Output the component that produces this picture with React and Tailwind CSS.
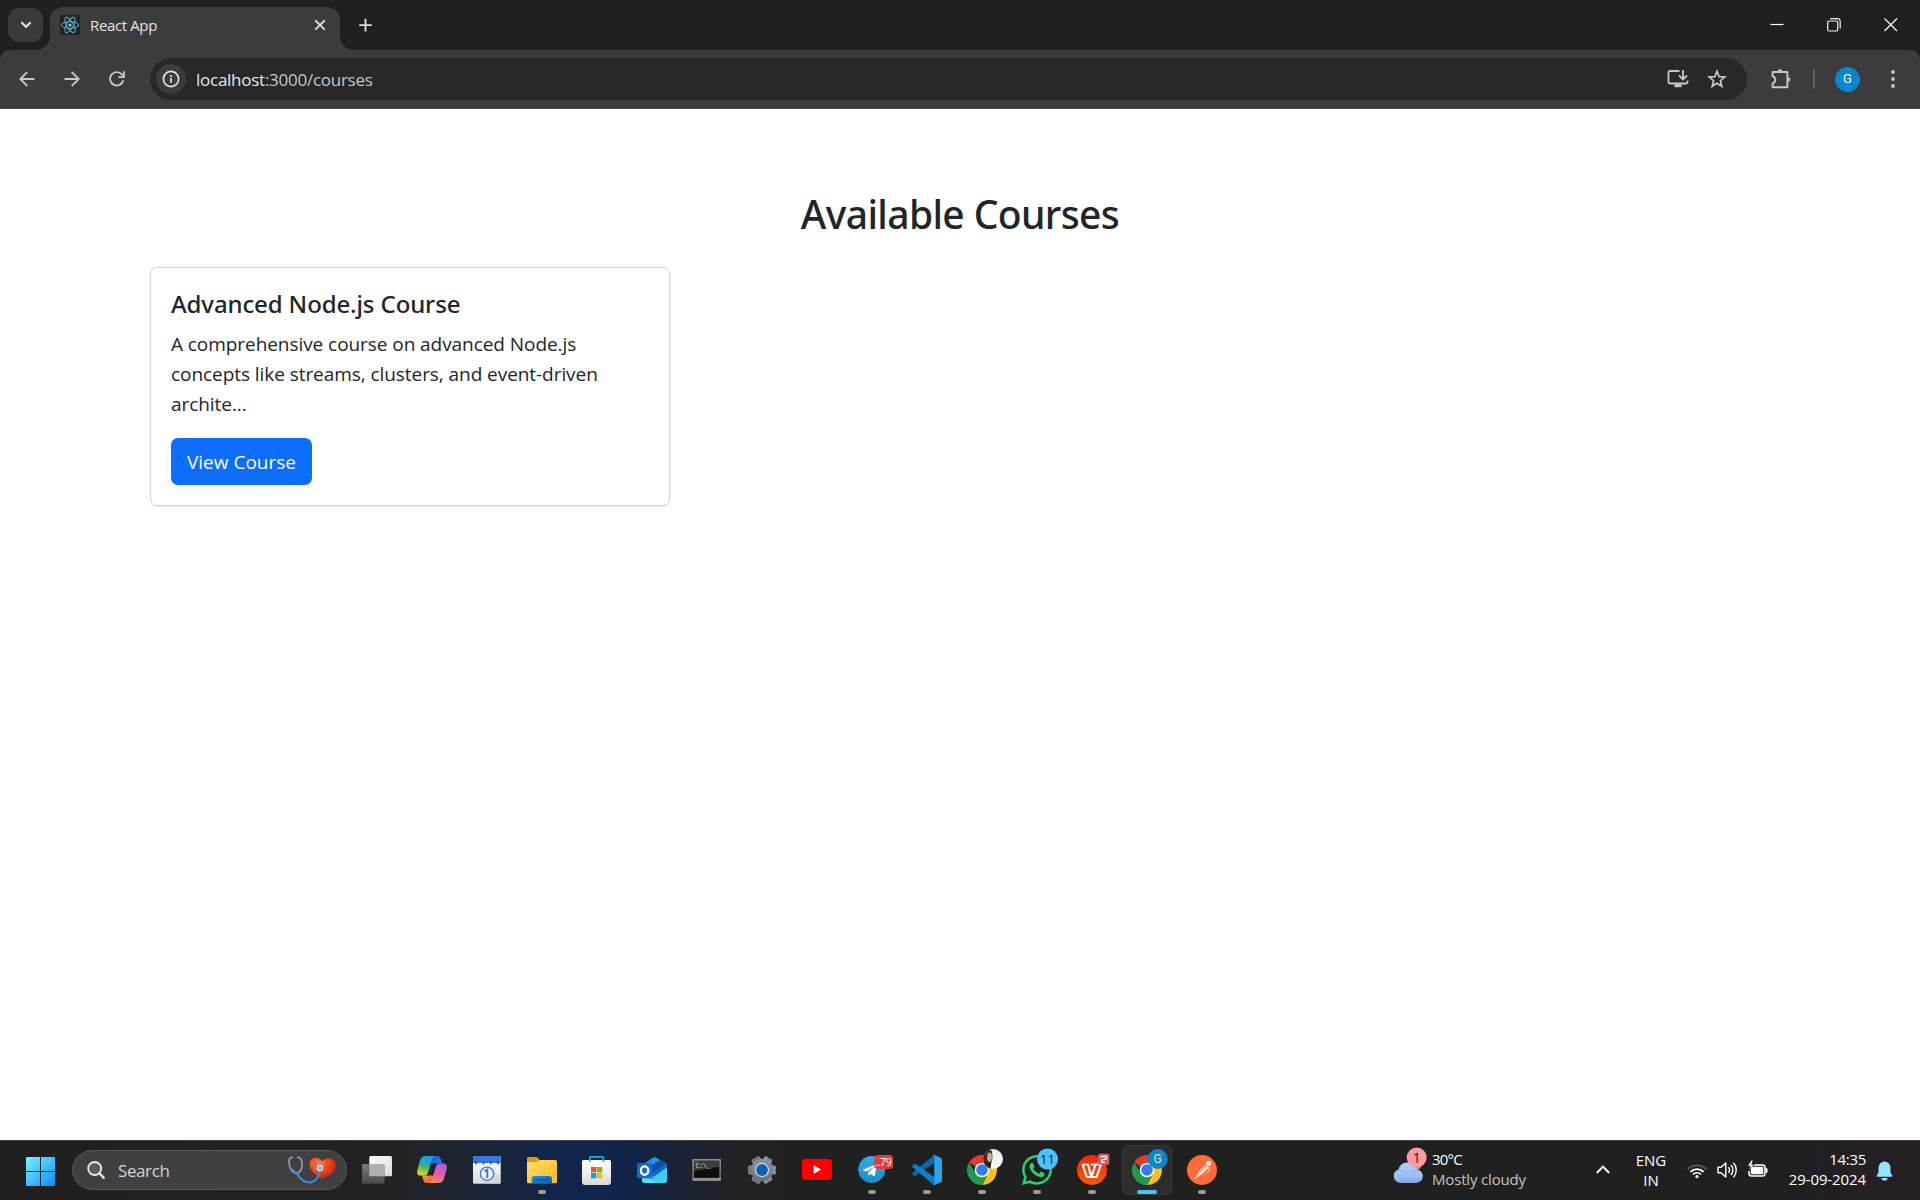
import { FaWhatsapp, FaTelegramPlane } from "react-icons/fa";

function ReactLogo() {
  return (
    <svg viewBox="0 0 20 20" className="size-5 shrink-0">
      <rect width="20" height="20" rx="1" fill="#222324" />
      <g fill="none" stroke="#56b5cc" strokeWidth="1">
        <ellipse cx="10" cy="10" rx="8.6" ry="3.3" />
        <ellipse cx="10" cy="10" rx="8.6" ry="3.3" transform="rotate(60 10 10)" />
        <ellipse cx="10" cy="10" rx="8.6" ry="3.3" transform="rotate(120 10 10)" />
      </g>
      <circle cx="10" cy="10" r="1.6" fill="#61dafb" />
    </svg>
  );
}

function TabStrip() {
  return (
    <div className="flex h-[50px] items-start bg-[#1f2120]">
      <div className="flex h-[50px] flex-1 items-start">
        <button className="ml-2 mt-2 flex h-[34px] w-[35px] items-center justify-center rounded-[11px] bg-[#3a3a3a]">
          <svg viewBox="0 0 12 8" className="h-2 w-3" fill="none" stroke="#e3e3e3" strokeWidth="2">
            <path d="M1.3 1.3 6 5.8l4.7-4.5" />
          </svg>
        </button>
        <div className="flex h-[50px] items-end">
          <svg viewBox="0 0 14 14" className="-ml-[7px] size-[14px]" fill="#3c3c3c">
            <path d="M14 0v14H0A14 14 0 0 0 14 0Z" />
          </svg>
          <div className="flex h-[43px] w-[290px] items-center rounded-t-[13px] bg-[#3c3c3c] pb-[7px] pl-[10px] pr-3">
            <ReactLogo />
            <span className="ml-[10px] flex-1 text-[15px] leading-5 tracking-[-0.37px] text-[#e3e3e3]">React App</span>
            <svg viewBox="0 0 16 16" className="size-4" fill="none" stroke="#e3e3e3" strokeWidth="1.9">
              <path d="m3.3 3.3 9.4 9.4M12.7 3.3l-9.4 9.4" />
            </svg>
          </div>
          <svg viewBox="0 0 14 14" className="size-[14px]" fill="#3c3c3c">
            <path d="M0 0v14h14A14 14 0 0 1 0 0Z" />
          </svg>
        </div>
        <svg viewBox="0 0 14 14" className="ml-1 mt-[18px] size-[14px]" fill="none" stroke="#dcdcdc" strokeWidth="1.9">
          <path d="M7.5 .8v12.6M1.2 7.1h12.6" />
        </svg>
      </div>
      <svg viewBox="0 0 14 14" className="mr-[43px] mt-[18px] size-[14px]" stroke="#fff" strokeWidth="1.2">
        <path d="M.5 6.500h13" />
      </svg>
      <svg viewBox="0 0 14 14" className="mr-[43px] mt-[18px] size-[14px]" fill="none" stroke="#f4f4f4" strokeWidth="1.2">
        <rect x=".7" y="3" width="10" height="10" rx="1.4" />
        <path d="M3.200 .7H10.600A2.700 2.700 0 0 1 13.200 3.400V10.400" />
      </svg>
      <svg viewBox="0 0 14 14" className="mr-[22px] mt-[18px] size-[14px]" stroke="#f4f4f4" strokeWidth="1.3">
        <path d="m.5.5 12.500 12.500M13 .5.5 13" />
      </svg>
    </div>
  );
}

function Toolbar() {
  return (
    <div className="bg-[#1f2120]">
      <div className="flex h-[59px] items-center rounded-t-[10px] border-b border-[#4a4a4a] bg-[#3c3c3c]">
        <svg viewBox="0 0 16 16" className="ml-[19px] size-4" fill="none" stroke="#c7c7c7" strokeWidth="1.8">
          <path d="M15.500 8H1.500M8.300 1 1.300 8l7 7" />
        </svg>
        <svg viewBox="0 0 16 16" className="ml-[29px] size-4" fill="none" stroke="#c7c7c7" strokeWidth="1.8">
          <path d="M.5 8h14M7.700 1l7 7-7 7" />
        </svg>
        <svg viewBox="0 0 16 16" className="ml-[29px] size-4" fill="none" stroke="#c7c7c7" strokeWidth="1.8">
          <path d="M14.300 9.300A6.700 6.700 0 1 1 13 3.600L14.800 5.600M15 .3v5.800H9.200" />
        </svg>
        <div className="ml-[25px] flex h-[42px] w-[1597px] items-center rounded-full bg-[#282828] pl-[6px] pr-5">
          <div className="flex size-[30px] items-center justify-center rounded-full bg-[#3c3c3c]">
            <svg viewBox="0 0 18 18" className="size-[18px]" fill="none" stroke="#e3e3e3" strokeWidth="1.7">
              <circle cx="9" cy="9" r="7.600" />
              <path d="M9 8v4.800M9 5v1.900" />
            </svg>
          </div>
          <span className="ml-[10px] flex-1 pt-[2px] text-[17px] leading-6 tracking-[-0.26px] text-[#c7c7c7]">
            <span className="text-[#e8e8e8]">localhost</span>:3000/courses
          </span>
          <svg viewBox="0 0 22 20" className="h-5 w-[22px]" fill="none" stroke="#c7c7c7" strokeWidth="1.8">
            <path d="M12.500 2H3A1.500 1.500 0 0 0 1.500 3.500V13A1.500 1.500 0 0 0 3 14.500H19A1.500 1.500 0 0 0 20.500 13V11.500" />
            <path d="M16 1v9M12 6.500 16 10.400l4-3.900" />
            <path d="M7.500 16.700h7" strokeWidth="3" />
          </svg>
          <svg viewBox="0 0 20 20" className="ml-[18px] size-5" fill="none" stroke="#c7c7c7" strokeWidth="1.7">
            <path d="m10 2.300 2.100 5.300 5.700.4-4.400 3.700 1.400 5.600L10 14.300l-4.800 3 1.400-5.600L2.200 8l5.700-.4Z" />
          </svg>
        </div>
        <svg viewBox="0 0 22 22" className="ml-[23px] size-[22px]" fill="none" stroke="#c7c7c7" strokeWidth="1.9">
          <path d="M2.600 4h14.800V19.300H2.600V15.300A3.600 3.600 0 0 0 2.600 8.300Z" strokeLinejoin="round" />
          <path d="M7.700 3.200a2.300 2 0 0 1 4.600 0ZM18.300 9.300a2 2.300 0 0 1 0 4.600Z" fill="#c7c7c7" stroke="none" />
        </svg>
        <div className="ml-[21px] h-5 w-[2px] bg-[#5f6061]" />
        <div className="ml-5 flex size-[25px] items-center justify-center rounded-full bg-[#0288d1] font-['Roboto'] text-[13px] text-white">G</div>
        <svg viewBox="0 0 4 18" className="ml-[31px] h-[18px] w-1" fill="#c7c7c7">
          <circle cx="2" cy="2" r="1.900" />
          <circle cx="2" cy="9" r="1.900" />
          <circle cx="2" cy="16" r="1.900" />
        </svg>
      </div>
    </div>
  );
}

function CoursesPage() {
  return (
    <main className="flex-1 bg-white px-[150px] pt-[81px] text-[#212529]">
      <h1 className="text-center font-['Noto_Sans'] text-[39px] font-medium leading-[48px] tracking-[-0.62px]">Available Courses</h1>
      <article className="mt-[29px] h-[239px] w-[520px] rounded-[7px] border border-[#d2d2d3] px-5 pt-[21px] shadow-[0_1px_3px_rgba(0,0,0,0.08)]">
        <h2 className="font-['Noto_Sans'] text-[24px] font-medium leading-[30px] tracking-[-0.12px]">Advanced Node.js Course</h2>
        <p className="mt-[10px] text-[19px] leading-[30px] tracking-[-0.06px]">
          A comprehensive course on advanced Node.js
          <br />
          concepts like streams, clusters, and event-driven
          <br />
          archite...
        </p>
        <button className="mt-[19px] h-[47px] w-[141px] whitespace-nowrap rounded-[7px] bg-[#0d6efd] pt-0.5 text-[19px] text-white">View Course</button>
      </article>
    </main>
  );
}

const TaskViewIcon = () => (
  <>
    <defs>
      <linearGradient id="tv" x1="0" y1="0" x2="1" y2="1"><stop stopColor="#fff" /><stop offset="1" stopColor="#d8d8d8" /></linearGradient>
      <linearGradient id="tb" x1="0" y1="0" x2="0" y2="1"><stop stopColor="#7a7a7a" /><stop offset="1" stopColor="#4c4c4c" /></linearGradient>
    </defs>
    <rect x="7.300" y="0" width="22.700" height="20.300" rx="1.500" fill="url(#tv)" />
    <rect x="0" y="8" width="22.500" height="19.700" rx="1.500" fill="url(#tb)" />
    <path d="M7.300 8H21a1.500 1.500 0 0 1 1.500 1.500v10.800H8.800a1.500 1.500 0 0 1-1.500-1.500Z" fill="#b0b0b0" />
  </>
);

const CopilotIcon = () => (
  <>
    <defs>
      <linearGradient id="cp1" x1=".6" y1="0" x2=".3" y2="1"><stop stopColor="#1b9de8" /><stop offset=".35" stopColor="#22a6c9" /><stop offset=".65" stopColor="#5cc04f" /><stop offset="1" stopColor="#f2d21c" /></linearGradient>
      <linearGradient id="cp2" x1=".7" y1="0" x2=".3" y2="1"><stop stopColor="#a85be8" /><stop offset=".5" stopColor="#e85aa8" /><stop offset="1" stopColor="#fb8a5c" /></linearGradient>
      <linearGradient id="cp3" x1="0" y1="0" x2="1" y2="1"><stop stopColor="#1250c4" /><stop offset="1" stopColor="#2a86e8" /></linearGradient>
      <linearGradient id="cp4" x1="0" y1="0" x2="1" y2="1"><stop stopColor="#f9a03a" /><stop offset="1" stopColor="#ee4f3c" /></linearGradient>
    </defs>
    <path d="M14 0h6c2.600 0 3.400 1.500 4 3.800l1 3.700H14Z" fill="url(#cp3)" />
    <path d="M16 27h-6c-2.600 0-3.400-1.500-4-3.800L5 19.500H16Z" fill="url(#cp4)" />
    <path d="M9 0h10c-2.500.4-3.600 2.200-4.400 4.800l-3.200 10.800c-.9 3-2 4-4.600 4H4c-3.400 0-4.600-2.400-3.600-5.900L3 4.600C4 1.300 5.600 0 9 0Z" fill="url(#cp1)" />
    <path d="M21 27H11c2.500-.4 3.600-2.200 4.400-4.800l3.200-10.800c.9-3 2-4 4.600-4H26c3.400 0 4.600 2.400 3.600 5.900L27 22.400c-1 3.300-2.600 4.600-6 4.600Z" fill="url(#cp2)" />
  </>
);

const CalendarIcon = () => (
  <>
    <defs><linearGradient id="cal" x1="0" y1="0" x2="0" y2="1"><stop stopColor="#fff" /><stop offset="1" stopColor="#dcdcdc" /></linearGradient></defs>
    <rect x="1" y="0" width="27.700" height="27.700" rx="1.500" fill="url(#cal)" />
    <path d="M2.500 0h24.700a1.500 1.500 0 0 1 1.500 1.500V7H1V1.500A1.500 1.500 0 0 1 2.500 0Z" fill="#3576e4" />
    <path d="M19.500 13 28.700 22v5.700H14l-4-4Z" fill="#c9ccd2" opacity=".55" />
    {[4, 11.500, 18.700, 26].map((x) => <rect key={x} x={x - 0.8} y="5" width="1.700" height="3.500" rx=".8" fill="#474c57" />)}
    <circle cx="15" cy="17.700" r="6.600" fill="#f4f6fa" stroke="#3576e4" strokeWidth="1.300" />
    <path d="M12.500 15.300 15.300 13.700V22" fill="none" stroke="#3576e4" strokeWidth="2" />
  </>
);

const ExplorerIcon = () => (
  <>
    <defs>
      <linearGradient id="fo" x1="0" y1="0" x2="1" y2="1"><stop stopColor="#ffdc6a" /><stop offset="1" stopColor="#f9b91c" /></linearGradient>
      <linearGradient id="fb" x1="0" y1="0" x2="1" y2="1"><stop stopColor="#1a90dc" /><stop offset="1" stopColor="#0b5fae" /></linearGradient>
    </defs>
    <path d="M0 2.500A1.500 1.500 0 0 1 1.500 1h7.300c1 0 1.600.4 2.300 1.200l1.500 1.600V8H0Z" fill="#dc9a0c" />
    <path d="M0 6h9.500l3.200-2H28.500A1.500 1.500 0 0 1 30 5.500v20.300a1.500 1.500 0 0 1-1.500 1.500h-27A1.500 1.500 0 0 1 0 25.800Z" fill="url(#fo)" />
    <path d="M4.700 27.300V23a3 3 0 0 1 3-3H22a3 3 0 0 1 3 3v4.300Z" fill="url(#fb)" />
    <path d="M8.300 23.700h13.400" stroke="#084b8f" strokeWidth="1.200" />
  </>
);

const StoreIcon = () => (
  <>
    <defs><linearGradient id="st" x1="0" y1="0" x2="0" y2="1"><stop stopColor="#fff" /><stop offset="1" stopColor="#dadada" /></linearGradient></defs>
    <path d="M0 5.500A1.500 1.500 0 0 1 1.500 4h26A1.500 1.500 0 0 1 29 5.500V26a3 3 0 0 1-3 3H3a3 3 0 0 1-3-3Z" fill="url(#st)" />
    <path d="M7.800 6V1.500q0-.7.7-.7h12.200q.7 0 .7.700V6" fill="none" stroke="#28a8e0" strokeWidth="1.700" />
    <rect x="9" y="11" width="5.300" height="5.300" fill="#f25022" /><rect x="15" y="11" width="5.300" height="5.300" fill="#7fba00" />
    <rect x="9" y="17" width="5.300" height="5.300" fill="#00a4ef" /><rect x="15" y="17" width="5.300" height="5.300" fill="#ffb900" />
  </>
);

const OutlookIcon = () => (
  <>
    <path d="M5 9 17.300 1 28 6.500q2 1.200 2 3V24a3 3 0 0 1-3 3H8a3 3 0 0 1-3-3Z" fill="#2aa5e8" />
    <path d="M5 9 17.300 1 23 4 9 13H5Z" fill="#2c8fe0" />
    <path d="M9 13 23 4l5 2.500q1 .7 1.400 1.500L13 19Z" fill="#0a4fa8" />
    <path d="M13 19 29.400 8q.6.700.6 2v1.500L17 20.500Z" fill="#1266c4" />
    <path d="M30 11.500V24a3 3 0 0 1-3 3H8.500Z" fill="#3fcdf5" />
    <path d="M5 19 21 27H8a3 3 0 0 1-3-3Z" fill="#58e0fb" />
    <rect x="0" y="7" width="15.500" height="15.300" rx="1.500" fill="#0f6cc9" />
    <ellipse cx="7.600" cy="14.600" rx="3.700" ry="4.200" fill="none" stroke="#fff" strokeWidth="2.300" />
  </>
);

const TerminalIcon = () => (
  <>
    <defs><linearGradient id="cm" x1="0" y1="0" x2="0" y2="1"><stop stopColor="#8f8f8f" /><stop offset=".8" stopColor="#6c6c6c" /><stop offset="1" stopColor="#a8a8a8" /></linearGradient></defs>
    <rect x=".3" y="3" width="28.700" height="21.700" rx="1" fill="url(#cm)" />
    <rect x="2" y="4.800" width="25.300" height="17" fill="#0d0d0d" />
    <path d="M2 4.800h25.300v6L2 15Z" fill="#3c3c3c" />
    <text x="3.600" y="12" fontFamily="Liberation Mono" fontSize="7" fill="#d5d5d5" textLength="15">C:\_</text>
  </>
);

const SettingsIcon = () => (
  <>
    <defs><linearGradient id="gr" x1="0" y1="0" x2="0" y2="1"><stop stopColor="#8b949e" /><stop offset="1" stopColor="#69727c" /></linearGradient></defs>
    <g fill="url(#gr)" stroke="#7b848e" strokeWidth="1" strokeLinejoin="round">
      {[30, 90, 150].map((a) => <path key={a} d="M10.500 4 11.300 .5h3v.8h1.400v-.8h3L19.500 4v20l-.8 3.500h-7.400L10.500 24Z" transform={`rotate(${a} 15 14)`} />)}
      <circle cx="15" cy="14" r="11" stroke="none" />
    </g>
    <circle cx="15" cy="14" r="7.200" fill="#d2dae2" />
    <circle cx="15" cy="14" r="5.900" fill="#0f5fb0" />
  </>
);

const YoutubeIcon = () => (
  <>
    <rect x="0" y="3" width="30" height="21" rx="3.500" fill="#fe0000" />
    <path d="M11.700 9.300v8.400l7.500-4.200Z" fill="#fff" />
  </>
);

const VsCodeIcon = () => (
  <>
    <path d="M22-1 .6 16.800q-.8.800 0 1.600l1.500 1.500q.7.500 1.500 0L23 6.500Z" fill="#0b66a8" />
    <path d="M22 29 .6 11.200q-.8-.8 0-1.600l1.500-1.500q.7-.5 1.500 0L23 21.500Z" fill="#0f7fc8" />
    <path d="M22-1.300 29 2q1 .6 1 1.800v20.400q0 1.200-1 1.800l-7 3.300q-1.200.2-1.800-.6 2.100.5 2.100-1.700V1q0-2.200-2.100-1.700.6-.8 1.800-.6Z" fill="#27a5f2" />
  </>
);

const ChromeDisc = () => (
  <>
    <path d="M15 14 2 6.500A15 15 0 0 1 28.300 7Z" fill="#e33b2e" />
    <path d="M15 7h13.300A15 15 0 0 1 15.300 29L21 17.500Z" fill="#fbc116" />
    <path d="M2 6.500 8.900 17.500 15 21l6-3.500L15.300 29A15 15 0 0 1 2 6.500Z" fill="#229a4b" />
    <circle cx="15" cy="14" r="7.300" fill="#fff" />
    <circle cx="15" cy="14" r="5.800" fill="#2f7de9" />
  </>
);

const ChromeGuestIcon = () => (
  <>
    <ChromeDisc />
    <circle cx="26" cy="3" r="10" fill="#f2f3f5" />
    <path d="M19 10A10 10 0 0 1 22-6.200L25-5l.5 7L23 12.500A10 10 0 0 1 19 10Z" fill="#3b2a27" />
    <path d="M20.500-2.500q3-2 4 0l.6 4.500-1 3.500-2.400.5-1.700-3Z" fill="#d9a389" />
    <path d="M17.500 8.500 21 6l3 1-.5 5.500Z" fill="#20242c" />
  </>
);

const TelegramIcon = () => (
  <>
    <defs><linearGradient id="tg" x1="0" y1="0" x2="0" y2="1"><stop stopColor="#35a9e0" /><stop offset="1" stopColor="#1f8cc6" /></linearGradient></defs>
    <circle cx="14.700" cy="13.500" r="13.500" fill="url(#tg)" />
    <FaTelegramPlane x="5" y="6.500" size={16} color="#fff" />
    <rect x="17.300" y="-1" width="18.700" height="14" rx="3.500" fill="#e43c3c" />
    <text x="18.300" y="10" fontFamily="Open Sans" fontSize="11" fill="#fff" textLength="16.500">..79</text>
  </>
);

const WhatsappIcon = () => (
  <>
    <FaWhatsapp x="-2.150" y="-3.150" size={34.3} color="#25d366" />
    <circle cx="25.500" cy="3" r="10.500" fill="#4cc2ff" />
    <text x="25.500" y="7.500" textAnchor="middle" fontFamily="Open Sans" fontSize="13" fill="#0b1a22">11</text>
  </>
);

const WpsIcon = () => (
  <>
    <defs><linearGradient id="wp" x1="0" y1="0" x2="0" y2="1"><stop stopColor="#f8240f" /><stop offset="1" stopColor="#fd5a00" /></linearGradient></defs>
    <circle cx="15" cy="14" r="15" fill="url(#wp)" />
    <path d="M5.500 8.500h5.500l3.500 12.500 4-12.500h5.500L19.500 21h-5M5.500 8.500 9.800 21h4.500l-2-7" fill="none" stroke="#fff" strokeWidth="2.100" strokeLinejoin="round" />
    <path d="M14 8.500h6" stroke="#fff" strokeWidth="1.800" />
    <rect x="21.300" y="-2.300" width="11" height="11" rx="1.500" fill="#d9596a" />
    <path d="M24.300 1.500V.3h5v2.500l-4.600 1.300v2.300h3.300" fill="none" stroke="#fff" strokeWidth="1.300" />
  </>
);

const ChromeProfileIcon = () => (
  <>
    <ChromeDisc />
    <circle cx="25.700" cy="3" r="10" fill="#0f86c9" />
    <text x="25.700" y="7.300" textAnchor="middle" fontFamily="Roboto" fontSize="12" fill="#cfe6f5">G</text>
  </>
);

const PostmanIcon = () => (
  <>
    <circle cx="15" cy="14" r="15" fill="#ff6c37" />
    <circle cx="21.600" cy="7.200" r="2.500" fill="#ffe9df" />
    <path d="m20 9.500 2 1.800-6.500 6.800-8 5 5-7.800Z" fill="#ffe3d6" />
    <path d="m19 9-6.500 6.500M22.300 10.800 22 15l-3.500 3M7 23l5-4.500" fill="none" stroke="#ffe3d6" strokeWidth=".9" />
    <path d="m12.800 16 6.500-5.500" stroke="#ff6c37" strokeWidth=".7" />
  </>
);

const apps = [
  { name: "Task view", Icon: TaskViewIcon },
  { name: "Copilot", Icon: CopilotIcon },
  { name: "Calendar", Icon: CalendarIcon },
  { name: "Explorer", Icon: ExplorerIcon, running: true },
  { name: "Store", Icon: StoreIcon },
  { name: "Outlook", Icon: OutlookIcon },
  { name: "Terminal", Icon: TerminalIcon },
  { name: "Settings", Icon: SettingsIcon },
  { name: "YouTube", Icon: YoutubeIcon },
  { name: "Telegram", Icon: TelegramIcon, running: true },
  { name: "VS Code", Icon: VsCodeIcon, running: true },
  { name: "Chrome guest", Icon: ChromeGuestIcon, running: true },
  { name: "WhatsApp", Icon: WhatsappIcon, running: true },
  { name: "WPS", Icon: WpsIcon, running: true },
  { name: "Chrome", Icon: ChromeProfileIcon, active: true },
  { name: "Postman", Icon: PostmanIcon, running: true },
];

function AppButton({ name, Icon, running, active }) {
  return (
    <button
      aria-label={name}
      className={`mx-[2.5px] flex h-[50px] w-[50px] flex-col items-center rounded-md border pt-[10px] ${active ? "border-[#3a3a3a] bg-[#2d2d2d]" : "border-transparent"}`}
    >
      <svg viewBox="0 0 30 30" className="size-[30px] shrink-0 overflow-visible"><Icon /></svg>
      {running && <span className="mt-1 h-1 w-2 shrink-0 rounded-full bg-[#9a9a9a]" />}
      {active && <span className="mt-1 h-1 w-5 shrink-0 rounded-full bg-[#4cc2ff]" />}
    </button>
  );
}

function SearchBox() {
  return (
    <div className="ml-[17px] flex h-10 w-[275px] items-center rounded-full border border-[#565658] bg-[#404042] pl-[14px] pr-[10px]">
      <svg viewBox="0 0 18 18" className="size-[18px]" fill="none" stroke="#ececec" strokeWidth="1.800">
        <circle cx="7.700" cy="7.500" r="6.500" fill="#5a5a5c" />
        <path d="m12.400 12.300 5 5.300" strokeWidth="2.300" />
      </svg>
      <span className="ml-[13px] flex-1 pt-px text-[17px] leading-6 tracking-[-0.4px] text-[#d3d3d3]">Search</span>
      <svg viewBox="0 0 48 28" className="h-7 w-12">
        <defs>
          <radialGradient id="heart" cx=".35" cy=".3" r=".8"><stop stopColor="#ff8a5a" /><stop offset=".45" stopColor="#f5431f" /><stop offset="1" stopColor="#b81a12" /></radialGradient>
        </defs>
        <path d="M33.500 23C27 19 21.500 14 21.500 7.500 21.500 1 30-.5 34.500 5 39-.5 48 2.500 48 9c0 7-6.500 11-14.500 14Z" fill="url(#heart)" />
        <path d="M5 1.500Q1 1 1 5.500C1 12 4.500 17 8.500 17s6-4 5.500-10.500C13.500 2.500 12 1 9 1.500" fill="none" stroke="#8d9aa6" strokeWidth="1.800" />
        <path d="M4 13q2 4 5 4.500C12 24 18 27 22.500 26.500 29 25.500 31.500 19 32 12" fill="none" stroke="#3d8fdb" strokeWidth="1.900" />
        <circle cx="32" cy="12" r="3.800" fill="#d9dcdf" stroke="#6f7a84" strokeWidth=".8" />
        <circle cx="32" cy="12" r="1.600" fill="#8b959d" />
      </svg>
    </div>
  );
}

function SystemTray() {
  return (
    <div className="flex h-full items-start pr-[27px] pt-[9px] text-[15px] leading-5 text-white">
      <svg viewBox="0 0 34 40" className="-mt-1 mr-[6px] h-10 w-[34px] overflow-visible">
        <defs><linearGradient id="cl" x1="0" y1="0" x2="0" y2="1"><stop stopColor="#b4cdf8" /><stop offset=".7" stopColor="#9bbdf4" /><stop offset="1" stopColor="#7fa0e0" /></linearGradient></defs>
        <circle cx="23.500" cy="20" r="5" fill="#f57a1c" />
        <path d="M7 39a7 7 0 0 1-1.500-13.600A8.500 8.500 0 0 1 21 22.500a8 8 0 0 1 4 3.200A6.800 6.800 0 0 1 23 39Z" fill="url(#cl)" transform="translate(0 -1)" />
        <path d="M5.500 25.500q5-1 8 2.500M19 27q3-2.500 6.500-1.500" fill="none" stroke="#86a9ea" strokeWidth="1" />
        <circle cx="23.700" cy="12.500" r="10" fill="#ff99a4" />
        <text x="23.700" y="17.500" textAnchor="middle" fontFamily="Open Sans" fontSize="14" fill="#241416">1</text>
      </svg>
      <div className="-ml-px w-[164px]">
        <div className="tracking-[-0.8px]">30°C</div>
        <div className="tracking-[-0.17px] text-[#c4c4c4]">Mostly cloudy</div>
      </div>
      <svg viewBox="0 0 14 9" className="mt-4 h-[9px] w-[14px]" fill="none" stroke="#fff" strokeWidth="1.900">
        <path d="m.8 8 6.200-6.300L13.200 8" />
      </svg>
      <div className="ml-[21px] mt-px w-10 text-center">
        <div>ENG</div>
        <div>IN</div>
      </div>
      <svg viewBox="0 0 20 16" className="ml-[16px] mt-[14px] h-4 w-5" fill="none" stroke="#fff" strokeWidth="1.700">
        <path d="M.6 6.300a13.300 13.300 0 0 1 18.800 0" stroke="#5b5b5b" />
        <path d="M3.400 8.800a9.300 9.300 0 0 1 13.200 0M6 11.400a5.700 5.700 0 0 1 8 0" />
        <circle cx="10" cy="13.600" r="1.600" fill="#fff" stroke="none" />
      </svg>
      <svg viewBox="0 0 20 18" className="ml-[10px] mt-3 h-[18px] w-5" fill="none" stroke="#fff" strokeWidth="1.400">
        <path d="M1 6.300h3L8.800 2v14L4 11.700H1Z" strokeLinejoin="round" />
        <path d="M11.400 6.300a4 4 0 0 1 0 5.400M13.900 4a7.200 7.200 0 0 1 0 10M16.400 1.800a10.500 10.500 0 0 1 0 14.400" />
      </svg>
      <svg viewBox="0 0 21 18" className="ml-[10px] mt-[11px] h-[18px] w-[21px]">
        <path d="M7 5h8.500A2.500 2.500 0 0 1 18 7.500v6a2.500 2.500 0 0 1-2.500 2.500h-11A2.500 2.500 0 0 1 2 13.500V11" fill="none" stroke="#fff" strokeWidth="1.500" />
        <rect x="3.800" y="6.800" width="12.500" height="7.500" rx="1" fill="#fff" />
        <path d="M18.700 8.300h1a.8.800 0 0 1 .8.800v3a.8.800 0 0 1-.8.800h-1Z" fill="#fff" />
        <path d="M4.500 0 .5 6h2.700L2 10.500 7.500 4.500H4.700L6 0Z" fill="#fff" stroke="#202020" strokeWidth=".6" />
      </svg>
      <div className="w-[98px] text-right">
        <div className="tracking-[-0.3px]">14:35</div>
        <div className="tracking-[-0.1px]">29-09-2024</div>
      </div>
      <svg viewBox="0 0 17 20" className="ml-[10px] mt-[12px] h-5 w-[17px]" fill="#8fe6fb">
        <path d="M8.500.5a6 6 0 0 1 6 6v5l1.800 3.200q.3 1-.8 1h-14q-1.100 0-.8-1L2.500 11.500v-5a6 6 0 0 1 6-6ZM5.500 17h6a3 2.600 0 0 1-6 0Z" />
      </svg>
    </div>
  );
}

function Taskbar() {
  return (
    <footer className="flex h-[60px] items-center bg-[#202020] bg-[linear-gradient(90deg,#202020_0,#222224_400px,#1a2434_480px,#11244a_560px,#10234b_620px,#1a2234_680px,#222223_750px,#202020_800px,#202020_1780px,#261f25_1910px)] shadow-[inset_0_1px_0_#3d4041]">
      <svg viewBox="0 0 29 29" className="ml-[26px] mt-[2px] size-[29px]">
        <defs><linearGradient id="win" gradientUnits="userSpaceOnUse" x1="0" y1="0" x2="29" y2="29"><stop stopColor="#7df0ff" /><stop offset="1" stopColor="#0a8df8" /></linearGradient></defs>
        <path d="M1 0h13v14H0V1a1 1 0 0 1 1-1ZM15 0h13a1 1 0 0 1 1 1v13H15ZM0 15h14v14H1a1 1 0 0 1-1-1ZM15 15h14v13a1 1 0 0 1-1 1H15Z" fill="url(#win)" />
      </svg>
      <SearchBox />
      <div className="ml-[2.500px] flex">
        {apps.map((app) => <AppButton key={app.name} {...app} />)}
      </div>
      <div className="flex-1" />
      <SystemTray />
    </footer>
  );
}

export default function App() {
  return (
    <div className="flex h-[1200px] w-[1920px] flex-col overflow-hidden font-['Open_Sans','Noto_Sans',sans-serif]">
      <TabStrip />
      <Toolbar />
      <CoursesPage />
      <Taskbar />
    </div>
  );
}
